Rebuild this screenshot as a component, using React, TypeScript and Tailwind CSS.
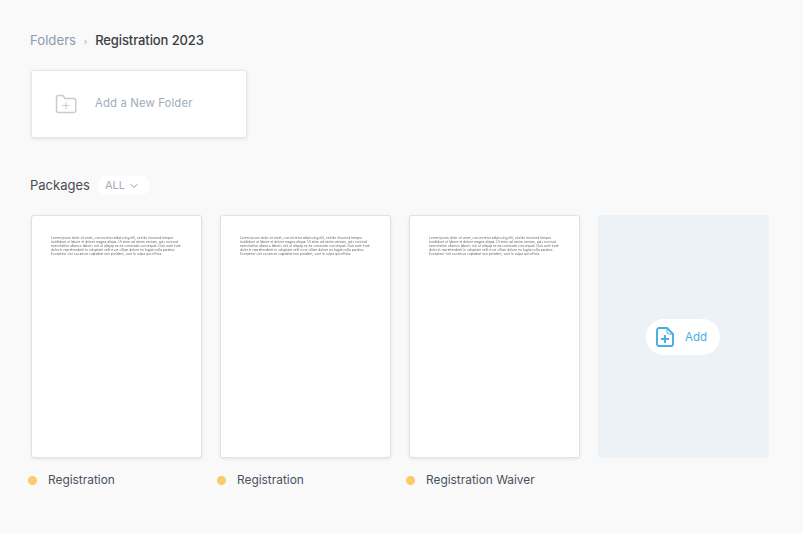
import { ChevronDown } from "lucide-react";

const lorem =
  "Lorem ipsum dolor sit amet, consectetur adipiscing elit, sed do eiusmod tempor incididunt ut labore et dolore magna aliqua. Ut enim ad minim veniam, quis nostrud exercitation ullamco laboris nisi ut aliquip ex ea commodo consequat. Duis aute irure dolor in reprehenderit in voluptate velit esse cillum dolore eu fugiat nulla pariatur. Excepteur sint occaecat cupidatat non proident, sunt in culpa qui officia.";

function PackageCard({ name }: { name: string }) {
  return (
    <div className="w-[171px]">
      <div className="h-[243px] rounded-[3px] border border-[#dfe3e8] bg-white pl-[19px] pr-[18px] pt-[20px] shadow-[0_1px_3px_rgba(60,70,90,0.12)]">
        <p className="text-[3.2px] leading-[4.1px] tracking-[0.03px] text-[#666] blur-[0.5px]">{lorem}</p>
      </div>
      <div className="mt-[16px] ml-[-3px] flex items-center gap-[11px]">
        <span className="h-[9px] w-[9px] rounded-full bg-[#fbcb6b]" />
        <span className="text-[11.9px] leading-[12px] text-[#4a5160]">{name}</span>
      </div>
    </div>
  );
}

export default function App() {
  return (
    <div className="h-[533px] w-[803px] overflow-hidden bg-[#f9f9fa] pl-[31px] pt-[32px] font-['Inter',sans-serif]">
      <div className="ml-[-1px] flex h-[18px] items-center">
        <span className="text-[13.2px] text-[#8d9bab]">Folders</span>
        <span className="mx-[8px] text-[8px] text-[#8d9bab]">›</span>
        <span className="text-[13px] font-medium tracking-[-0.1px] text-[#3a3d42]">Registration 2023</span>
      </div>

      <div className="mt-[20px] flex h-[68px] w-[216px] items-center rounded-[3px] border border-[#e6e8eb] bg-white pl-[23px] shadow-[0_1px_3px_rgba(60,70,90,0.14)]">
        <svg width="22" height="20" viewBox="0 0 22 20" fill="none" stroke="#c9cccf" strokeWidth="1.5" strokeLinejoin="round" strokeLinecap="round">
          <path d="M1.5 3.2a1.7 1.7 0 0 1 1.7-1.7h4.6l2.2 3h8.8a2 2 0 0 1 2 2v10.3a1.7 1.7 0 0 1-1.7 1.7H3.2a1.7 1.7 0 0 1-1.7-1.7z" />
          <path d="M11 8.2v6.6M7.7 11.5h6.6" strokeWidth="1" />
        </svg>
        <span className="ml-[18px] text-[11.4px] tracking-[0.1px] text-[#a2adb9]">Add a New Folder</span>
      </div>

      <div className="ml-[-1px] mt-[38px] flex h-[19px] items-center">
        <span className="text-[13px] text-[#494c50]">Packages</span>
        <div className="ml-[7px] flex h-[19px] w-[53px] items-center rounded-full bg-white pl-[8px] text-[#a2adb9]">
          <span className="text-[11px]">ALL</span>
          <ChevronDown className="ml-[3px] h-[12px] w-[12px] text-[#8d9bab]" strokeWidth={2} />
        </div>
      </div>

      <div className="mt-[20px] flex gap-[18px]">
        <PackageCard name="Registration" />
        <PackageCard name="Registration" />
        <PackageCard name="Registration Waiver" />
        <div className="flex h-[243px] w-[171px] items-center justify-center rounded-[3px] bg-[#edf2f6] pr-[1px]">
          <div className="flex h-[36px] w-[74px] items-center justify-center rounded-full bg-white pr-[3px] text-[#48ade3]">
            <svg width="18" height="20" viewBox="0 0 18 20" fill="none" stroke="currentColor" strokeWidth="1.9" strokeLinejoin="round" strokeLinecap="round">
              <path d="M3 1h8l6 6v10a2 2 0 0 1-2 2H3a2 2 0 0 1-2-2V3a2 2 0 0 1 2-2z" />
              <path d="M11 1v4a2 2 0 0 0 2 2h4" strokeWidth="1" />
              <path d="M9 8.8v6.4M5.8 12h6.4" strokeWidth="2" />
            </svg>
            <span className="ml-[11px] pt-[2px] text-[11.5px]">Add</span>
          </div>
        </div>
      </div>
    </div>
  );
}
